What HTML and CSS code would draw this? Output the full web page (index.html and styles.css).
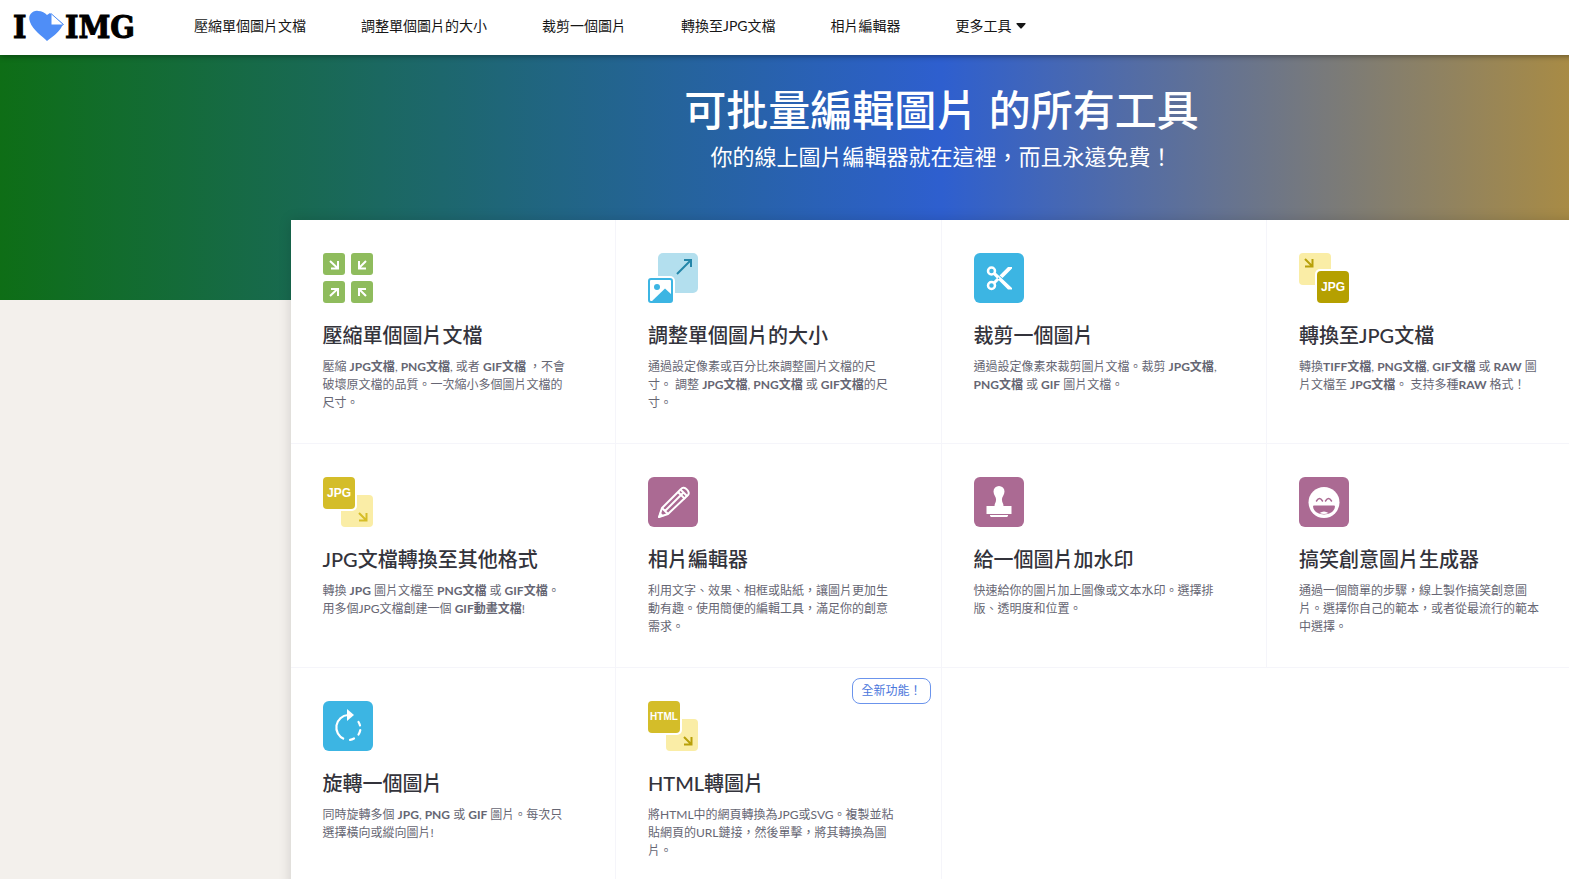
FILE: index.html
```html
<!DOCTYPE html>
<html lang="zh-Hant">
<head>
<meta charset="utf-8">
<meta name="viewport" content="width=device-width, initial-scale=1">
<title>iLoveIMG</title>
<link rel="stylesheet" href="styles.css">
</head>
<body>
<div class="viewport">
<div class="page">
  <header class="header">
    <a class="brand" href="#" aria-label="I love IMG">
      <svg width="122" height="44" viewBox="0 -6 122 44">
        <text class="brand-text" x="0" y="28">I</text>
        <text class="brand-text" x="52" y="28">IMG</text>
        <path fill="#4f8ef7" d="M34 31C29 26 20 20 17 12C14 4 21 0 25 1C29 1 32 3 34 5L37 3L50 14L48 18C45 23 39 27 34 31Z"/>
        <path fill="#fff" d="M38.500 4L50 14.500H38.500Z"/>
        <path fill="none" stroke="#4f8ef7" d="M38 3.500L50.500 14.500L46 17"/>
      </svg>
    </a>
    <nav class="nav">
      <a href="#">壓縮單個圖片文檔</a>
      <a href="#">調整單個圖片的大小</a>
      <a href="#">裁剪一個圖片</a>
      <a href="#">轉換至JPG文檔</a>
      <a href="#">相片編輯器</a>
      <a href="#" class="more">更多工具<svg width="10" height="6" viewBox="0 0 10 6"><path d="M1 0h8q1 0 .5 1L5.500 5.500h-1L.5 1Q0 0 1 0Z" fill="#161616"/></svg></a>
    </nav>
  </header>
  <section class="hero">
    <h1>可批量編輯圖片 的所有工具</h1>
    <p>你的線上圖片編輯器就在這裡，而且永遠免費！</p>
  </section>
  <main class="tools">
    <a class="tool" href="#">
      <svg class="icon" viewBox="0 0 50 50">
        <g fill="#8fbc5d"><rect width="22" height="22" rx="3"/><rect x="28" width="22" height="22" rx="3"/><rect y="28" width="22" height="22" rx="3"/><rect x="28" y="28" width="22" height="22" rx="3"/></g>
        <g fill="none" stroke="#fff" stroke-width="2"><path d="M7 8l7.500 7M15 8v7.500H8"/><path d="M43 8l-7 7M36 8v7.500h7"/><path d="M7 43l7.500-7M8 36h7v7"/><path d="M43 43l-7-7M36 43v-7h7"/></g>
      </svg>
      <h2>壓縮單個圖片文檔</h2>
      <p>壓縮 <b>JPG文檔</b>, <b>PNG文檔</b>, 或者 <b>GIF文檔</b> ，不會<br>破壞原文檔的品質。一次縮小多個圖片文檔的<br>尺寸。</p>
    </a>
    <a class="tool" href="#">
      <svg class="icon" viewBox="0 0 50 50">
        <rect x="10" width="40" height="40" rx="5" fill="#b3dfee"/>
        <path d="M29 21L43 7M36 7h7v7" fill="none" stroke="#2486a9" stroke-width="2"/>
        <rect x="-2" y="23" width="29" height="29" rx="5" fill="#fff"/>
        <rect x="1" y="26" width="23" height="23" rx="2" fill="#fff" stroke="#3cb5e3" stroke-width="2"/>
        <circle cx="9" cy="34" r="3" fill="#3cb5e3"/>
        <path d="M3 49L17 35.500L24 42v7Z" fill="#3cb5e3"/>
      </svg>
      <h2>調整單個圖片的大小</h2>
      <p>通過設定像素或百分比來調整圖片文檔的尺<br>寸。 調整 <b>JPG文檔</b>, <b>PNG文檔</b> 或 <b>GIF文檔</b>的尺<br>寸。</p>
    </a>
    <a class="tool" href="#">
      <svg class="icon" viewBox="0 0 50 50">
        <rect width="50" height="50" rx="6" fill="#3cb5e3"/>
        <g fill="none" stroke="#fff"><circle cx="17.500" cy="18" r="3.500" stroke-width="2.500"/><circle cx="17.500" cy="32.500" r="3.500" stroke-width="2.500"/><path d="M20 30L25 25" stroke-width="3"/></g>
        <path fill="#fff" d="M19 21.500L21.500 19.500L38 35V36.500H34ZM25.500 22.500L34 14H38V15.500L28.500 25Z"/>
        <circle cx="24.500" cy="25.300" r=".8" fill="#3cb5e3"/>
      </svg>
      <h2>裁剪一個圖片</h2>
      <p>通過設定像素來裁剪圖片文檔。裁剪 <b>JPG文檔</b>,<br><b>PNG文檔</b> 或 <b>GIF</b> 圖片文檔。</p>
    </a>
    <a class="tool" href="#">
      <svg class="icon" viewBox="0 0 50 50">
        <rect width="32" height="32" rx="4" fill="#faeda6"/>
        <path d="M6 6l7 7M13.500 6v7.500H6" fill="none" stroke="#b8a00a" stroke-width="2"/>
        <rect x="16" y="16" width="36" height="36" rx="5" fill="#fff"/>
        <rect x="18" y="18" width="32" height="32" rx="4" fill="#b5a000"/>
        <text class="icon-text" x="34" y="38">JPG</text>
      </svg>
      <h2>轉換至JPG文檔</h2>
      <p>轉換<b>TIFF文檔</b>, <b>PNG文檔</b>, <b>GIF文檔</b> 或 <b>RAW</b> 圖<br>片文檔至 <b>JPG文檔</b>。 支持多種<b>RAW</b> 格式！</p>
    </a>
    <a class="tool" href="#">
      <svg class="icon" viewBox="0 0 50 50">
        <rect x="18" y="18" width="32" height="32" rx="4" fill="#faeda6"/>
        <path d="M36 36l7 7M43.500 36v7.500H36" fill="none" stroke="#d5bd27" stroke-width="2"/>
        <rect x="-2" y="-2" width="36" height="36" rx="5" fill="#fff"/>
        <rect width="32" height="32" rx="4" fill="#d4bd29"/>
        <text class="icon-text" x="16" y="20">JPG</text>
      </svg>
      <h2>JPG文檔轉換至其他格式</h2>
      <p>轉換 <b>JPG</b> 圖片文檔至 <b>PNG文檔</b> 或 <b>GIF文檔</b>。<br>用多個JPG文檔創建一個 <b>GIF動畫文檔</b>!</p>
    </a>
    <a class="tool" href="#">
      <svg class="icon" viewBox="0 0 50 50">
        <rect width="50" height="50" rx="6" fill="#ab6a93"/>
        <g fill="none" stroke="#fff" stroke-width="2" stroke-linejoin="round"><path d="M11 40L14 31L33 12C36 8 43 15 40 18L20 37Z"/><path d="M14 31L20 37M17 34L35 16M30 15L37 22M32.500 12.500L39.500 19.500"/></g>
        <path d="M10 41l2-6 4 4Z" fill="#fff"/>
      </svg>
      <h2>相片編輯器</h2>
      <p>利用文字、效果、相框或貼紙，讓圖片更加生<br>動有趣。使用簡便的編輯工具，滿足你的創意<br>需求。</p>
    </a>
    <a class="tool" href="#">
      <svg class="icon" viewBox="0 0 50 50">
        <rect width="50" height="50" rx="6" fill="#ab6a93"/>
        <path fill="#fff" d="M25 9a5.500 5.500 0 0 1 5.500 5.500C30.500 18 27.500 20 28 23C28 25.500 29.500 26.500 29.500 29H37.500V37H12.500V29H20.500C20.500 26.500 22 25.500 22 23C22.500 20 19.500 18 19.500 14.500A5.500 5.500 0 0 1 25 9ZM16 38H34V39.500H33V40H17V39.500H16Z"/>
      </svg>
      <h2>給一個圖片加水印</h2>
      <p>快速給你的圖片加上圖像或文本水印。選擇排<br>版、透明度和位置。</p>
    </a>
    <a class="tool" href="#">
      <svg class="icon" viewBox="0 0 50 50">
        <rect width="50" height="50" rx="6" fill="#ab6a93"/>
        <circle cx="25" cy="25.500" r="15.500" fill="#fff"/>
        <path d="M17.500 24q3-5 6 0M26.500 24q3-5 6 0" fill="none" stroke="#ab6a93" stroke-width="1.500" stroke-linecap="round"/>
        <path d="M14 29.500q0-1 1-1H35q1 0 1 1C35 40 15 40 14 29.500Z" fill="#ab6a93"/>
        <path d="M20.500 36q4.500-3 9 0q-4.500 2-9 0Z" fill="#fff"/>
      </svg>
      <h2>搞笑創意圖片生成器</h2>
      <p>通過一個簡單的步驟，線上製作搞笑創意圖<br>片。選擇你自己的範本，或者從最流行的範本<br>中選擇。</p>
    </a>
    <a class="tool" href="#">
      <svg class="icon" viewBox="0 0 50 50">
        <rect width="50" height="50" rx="6" fill="#3cb5e3"/>
        <g fill="none" stroke="#fff" stroke-width="2.200"><path d="M25 14A12.500 12.500 0 0 0 21 38"/><path d="M35.500 21A12.500 12.500 0 0 1 37 24.500M37.300 29A12.500 12.500 0 0 1 35.500 33.500M31 37.500A12.500 12.500 0 0 1 27 38.800" stroke-linecap="round"/></g>
        <path d="M24 8L31 14L24 20Z" fill="#fff"/>
      </svg>
      <h2>旋轉一個圖片</h2>
      <p>同時旋轉多個 <b>JPG</b>, <b>PNG</b> 或 <b>GIF</b> 圖片。每次只<br>選擇橫向或縱向圖片!</p>
    </a>
    <a class="tool" href="#">
      <span class="badge">全新功能！</span>
      <svg class="icon" viewBox="0 0 50 50">
        <rect x="18" y="18" width="32" height="32" rx="4" fill="#faeda6"/>
        <path d="M36 36l7 7M43.500 36v7.500H36" fill="none" stroke="#b8a00a" stroke-width="2"/>
        <rect x="-2" y="-2" width="36" height="36" rx="5" fill="#fff"/>
        <rect width="32" height="32" rx="4" fill="#d4bd29"/>
        <text class="icon-text small" x="16" y="19">HTML</text>
      </svg>
      <h2>HTML轉圖片</h2>
      <p>將HTML中的網頁轉換為JPG或SVG。複製並粘<br>貼網頁的URL鏈接，然後單擊，將其轉換為圖<br>片。</p>
    </a>
  </main>
</div>
</div>
</body>
</html>
```
FILE: styles.css
```css
* { box-sizing: border-box; }
body {
  margin: 0;
  background: #f3f0ec;
  font-family: Lato, "Noto Sans CJK TC", sans-serif;
  color: #33333b;
}
a { color: inherit; text-decoration: none; }
.viewport { height: 100vh; overflow: hidden; }
.page { min-width: 1883px; }
.header {
  position: relative;
  display: flex;
  align-items: center;
  height: 55px;
  padding: 0 13px 4px;
  background: #fff;
  box-shadow: 0 1px 6px rgba(0, 0, 0, .4);
}
.brand { display: flex; width: 181px; }
.brand-text {
  font-family: "DejaVu Serif Condensed", "DejaVu Serif", serif;
  font-weight: 700;
  font-size: 32px;
  fill: #000;
  stroke: #000;
  stroke-width: 1px;
}
.nav { display: flex; gap: 55px; font-size: 14px; line-height: 20px; color: #161616; }
.more { display: flex; align-items: center; gap: 4px; }
.hero {
  height: 245px;
  padding-top: 25px;
  text-align: center;
  color: #fff;
  background: linear-gradient(90deg, #0e6e16, #2e5fcf 50%, #e5a100);
}
.hero h1 { margin: 0; font-size: 42px; line-height: 60px; font-weight: 500; }
.hero p { margin: 0; font-size: 22px; line-height: 34px; font-weight: 400; }
.tools {
  display: grid;
  grid-template-columns: repeat(4, 1fr);
  grid-auto-rows: minmax(224px, auto);
  max-width: 1302px;
  margin: -80px auto 0;
  background: #fff;
  box-shadow: 0 0 12px rgba(0, 0, 0, .15);
}
.tool {
  position: relative;
  padding: 33px 32px 30px;
  border-right: 1px solid #f5f5fa;
  border-bottom: 1px solid #f5f5fa;
}
.icon { display: block; width: 50px; height: 50px; margin: 0 0 17px; }
.icon-text {
  font: 700 12px "Liberation Sans", sans-serif;
  text-anchor: middle;
  fill: #fff;
}
.icon-text.small { font-size: 10px; }
.tool h2 { margin: 0 0 8px; font-size: 20px; line-height: 30px; font-weight: 500; white-space: nowrap; }
.tool p { margin: 0; font-size: 12px; line-height: 18px; font-weight: 400; color: #666673; white-space: nowrap; }
.tool b { font-weight: 700; }
.badge {
  position: absolute;
  top: 10px;
  right: 10px;
  padding: 3px 8px;
  border: 1px solid #6b94ec;
  border-radius: 8px;
  font-size: 12px;
  line-height: 18px;
  color: #4a76dc;
}
```
